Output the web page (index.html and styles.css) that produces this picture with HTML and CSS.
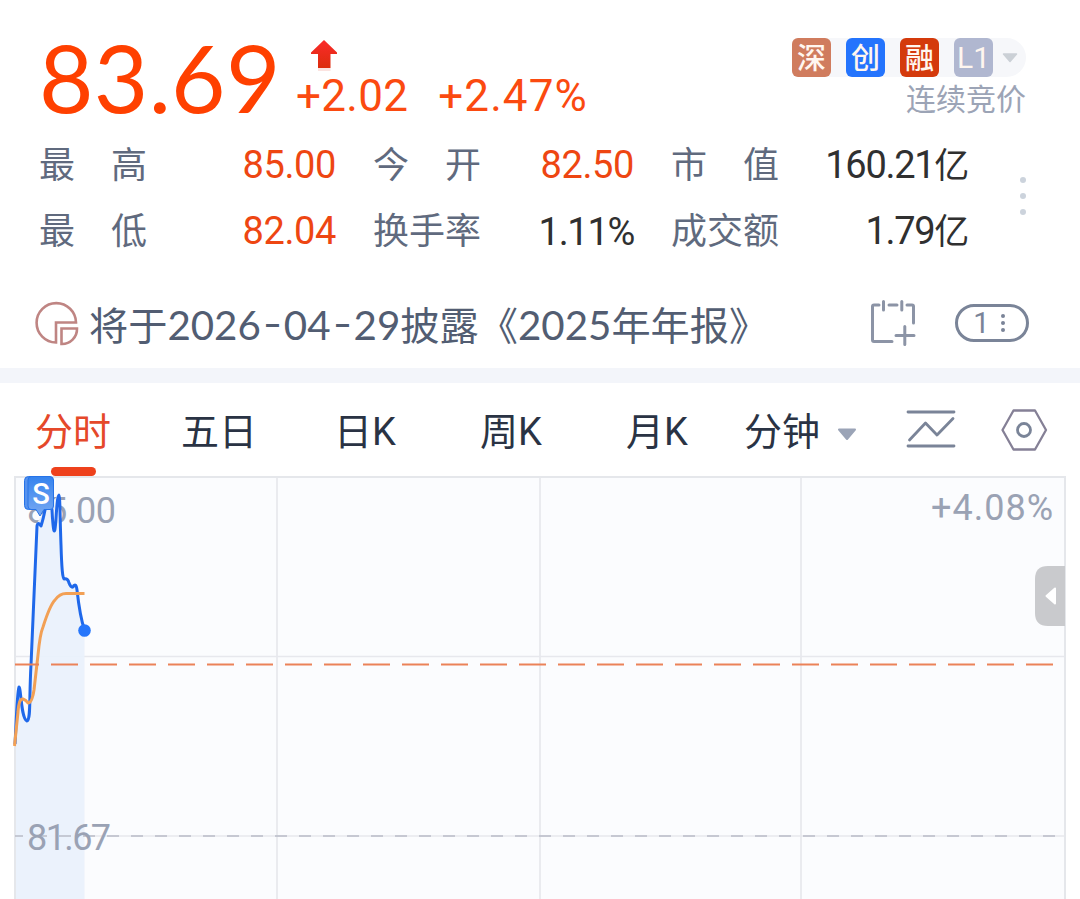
FILE: index.html
```
<!DOCTYPE html>
<html lang="zh-CN">
<head>
    <meta charset="UTF-8">
    <meta name="viewport" content="width=device-width, initial-scale=1.0">
    <title>分时</title>
    <link rel="stylesheet" href="styles.css">
</head>
<body>

    <div class="quote">
        <div class="top">
            <div class="price">83.69</div>
            <div class="change">
                <svg class="arrow" width="28" height="32" viewBox="0 0 28 32">
                    <defs>
                        <linearGradient id="red" x1="0" y1="0" x2="0" y2="1">
                            <stop offset="0" stop-color="#fb2b2b"/>
                            <stop offset="1" stop-color="#dc2c0c"/>
                        </linearGradient>
                    </defs>
                    <path d="M14 1L27 13.5V15H20.500V29H8V15H1V13.500Z" fill="url(#red)"/>
                    <path d="M8 29h12.500v3H8z" fill="#fbe3e0"/>
                </svg>
                <div class="nums"><span>+2.02</span><span class="percent">+2.47%</span></div>
            </div>
            <div class="status">
                <div class="badges">
                    <span class="badge sz">深</span>
                    <span class="badge cy">创</span>
                    <span class="badge rz">融</span>
                    <span class="badge lv">L1</span>
                    <svg width="16" height="10" viewBox="0 0 16 10"><path d="M1.500 1h13L8 8.500z" fill="#cbd0d6" stroke="#cbd0d6" stroke-width="1.500" stroke-linejoin="round"/></svg>
                </div>
                <div class="phase">连续竞价</div>
            </div>
        </div>

        <div class="stats">
            <div class="label"><span>最</span><span>高</span></div>
            <div class="value up">85.00</div>
            <div class="label"><span>今</span><span>开</span></div>
            <div class="value up">82.50</div>
            <div class="label"><span>市</span><span>值</span></div>
            <div class="value tight">160.21<span class="unit">亿</span></div>
            <div class="more"><i></i><i></i><i></i></div>
            <div class="label"><span>最</span><span>低</span></div>
            <div class="value up">82.04</div>
            <div class="label"><span>换</span><span>手</span><span>率</span></div>
            <div class="value tight">1.11%</div>
            <div class="label"><span>成</span><span>交</span><span>额</span></div>
            <div class="value tight">1.79<span class="unit">亿</span></div>
        </div>
    </div>

    <div class="notice">
        <svg width="46" height="46" viewBox="0 0 46 46" fill="none" stroke="#bf8583" stroke-width="2.600">
            <path d="M22 41.500A19.700 19.700 0 1 1 42 21.500H22Z"/>
            <path d="M27.500 27.500H43A15 15 0 0 1 27.500 43Z"/>
        </svg>
        <div class="text">将于<span class="date">2026<b>-</b>04<b>-</b>29</span>披露《<span class="date">2025</span>年年报》</div>
        <svg class="calendar" width="48" height="48" viewBox="0 0 48 48" fill="none" stroke="#8c94a6" stroke-width="3" stroke-linecap="round" stroke-linejoin="round">
            <path d="M10 6H5Q3.500 6 3.500 7.500V41Q3.500 42.500 5 42.500H23M20 6H28M38 6H43Q44.500 6 44.500 7.500V24"/>
            <path d="M14.500 2.500V11M32.800 2.500V11M27 36.500H45M35.800 27.500V45.500"/>
        </svg>
        <div class="count"><span>1</span><div class="dots"><i></i><i></i><i></i></div></div>
    </div>

    <div class="tabs">
        <div class="tab active">分时</div>
        <div class="tab">五日</div>
        <div class="tab">日K</div>
        <div class="tab">周K</div>
        <div class="tab">月K</div>
        <div class="tab minute">分钟
            <svg width="20" height="13" viewBox="0 0 20 13"><path d="M2 1.500h16L10 11z" fill="#9ba4b7" stroke="#9ba4b7" stroke-width="2" stroke-linejoin="round"/></svg>
        </div>
        <svg class="trend" width="50" height="40" viewBox="0 0 50 40" fill="none" stroke="#7a8498" stroke-width="2.800" stroke-linecap="round" stroke-linejoin="round">
            <path d="M2 3H48M2 37H48M3.500 31L19.500 14L31 26L47 9.500"/>
        </svg>
        <svg class="setting" width="48" height="44" viewBox="0 0 48 44" fill="none" stroke="#858096" stroke-width="2.300" stroke-linejoin="round">
            <path d="M13.500 2.500H35L46 22L35 41.500H13.500L2.500 22Z"/>
            <circle cx="24" cy="22" r="6.500" stroke="#7a8498" stroke-width="2.800"/>
        </svg>
    </div>

    <svg class="chart" width="1080" height="423" viewBox="0 476 1080 423">
        <defs>
            <linearGradient id="mark" x1="0" y1="0" x2="0" y2="1">
                <stop offset="0" stop-color="#3583ee"/>
                <stop offset="1" stop-color="#78a9f2"/>
            </linearGradient>
        </defs>
        <rect x="15" y="477" width="1050" height="440" fill="#fbfcfe" stroke="#e5e7eb" stroke-width="2"/>
        <path class="grid" d="M277 478V899M540 478V899M801 478V899M16 656.500H1064M16 836H1064"/>

        <!-- axis labels -->
        <text class="axis" x="27" y="523" textLength="89">85.00</text>
        <text class="axis" x="931" y="520" textLength="122">+4.08%</text>

        <!-- price -->
        <path d="M16 745L19 687L27 721L37 523L48 505L59 495L63 578L76 586L84.500 630V899H16Z" fill="#e9f1fc" fill-opacity=".92"/>
        <path d="M15 836H1057" stroke="#b9bcc7" stroke-width="1.700" stroke-dasharray="12 12" stroke-dashoffset="4"/>
        <text class="axis" x="27" y="850" textLength="84">81.67</text>
        <path class="line price-line" d="M15 744C16 728 17 692 19 687C21 687 21 719 27 721C31 719 29 700 31 665L37 526Q38 521 41 526Q43 520 45 510L49 498L52 510Q54 547 56 519C57 501 58 495 59 495C60 495 60 520 61 545Q62 579 64 579Q68 578 69 583Q71 588 73 587Q76 582 77 590Q80 617 84.500 630"/>
        <path class="line avg-line" d="M14.500 746L18 712Q19 698 23 699Q26 700 28 703Q32 703 34 690L38 655Q40 634 43 627Q50 605 55 600Q60 593 67 593.500H84.500"/>
        <path d="M15 664.500H1054" stroke="#eb8258" stroke-width="2" stroke-dasharray="27 12" stroke-dashoffset="3"/>
        <circle cx="84.500" cy="630.500" r="6.300" fill="#2676fb"/>

        <!-- trade marks -->
        <rect x="24.500" y="476.500" width="27" height="33" rx="4" fill="#5793ee" stroke="#2673e8"/>
        <path d="M31 476.500H50Q53.500 476.500 53.500 480V506Q53.500 509.500 50 509.500H44L40 516L36 509.500H31Q28 509.500 28 506V480Q28 476.500 31 476.500Z" fill="url(#mark)" stroke="#2673e8"/>
        <text class="mark" x="41" y="504">S</text>

        <!-- drawer handle -->
        <path d="M1065 566H1048Q1035 566 1035 579V613Q1035 626 1048 626H1065Z" fill="#c9cacd"/>
        <path d="M1055 588.500V603.500L1046.500 596Z" fill="#fff" stroke="#fff" stroke-width="2" stroke-linejoin="round"/>
    </svg>

</body>
</html>
```
FILE: styles.css
```
* {
    box-sizing: border-box;
}
html, body {
    margin: 0;
    padding: 0;
    background-color: white;
    font-family: Roboto, "Noto Sans CJK SC", sans-serif;
    overflow: hidden;
}
svg {
    display: block;
    flex: none;
}
.quote {
    height: 280px;
    padding: 32px 0 0 39px;
}
.top {
    display: flex;
    height: 100px;
}
.price {
    width: 257px;
    font-family: Lato, sans-serif;
    font-size: 94px;
    line-height: 90px;
    letter-spacing: 0.3px;
    color: #ff4000;
}
.arrow {
    margin: 7px 0 0 14px;
}
.nums {
    display: flex;
    gap: 30px;
    font-size: 44px;
    line-height: 50px;
    color: #fb4a10;
    letter-spacing: 0.3px;
}
.percent {
    letter-spacing: 1.1px;
}
.status {
    margin-left: auto;
    margin-right: 54px;
    padding-top: 6px;
}
.badges {
    display: flex;
    align-items: center;
    gap: 15px;
    width: 234px;
    height: 39px;
    border-radius: 6px 20px 20px 6px;
    background-color: #f6f7fa;
}
.badges svg {
    margin-left: -6px;
}
.badge {
    width: 39px;
    height: 39px;
    border-radius: 6px;
    color: #fff6ef;
    font-size: 29px;
    font-weight: 500;
    line-height: 42px;
    text-align: center;
}
.sz {
    background-color: #d07c5e;
}
.cy {
    background-color: #2474fd;
}
.rz {
    background-color: #d43a0c;
}
.lv {
    background-color: #b0b7d0;
    font-size: 30px;
    font-weight: normal;
    line-height: 39px;
}
.phase {
    font-size: 30px;
    line-height: 46px;
    text-align: right;
    color: #9ca4b6;
}
.stats {
    display: grid;
    grid-template-columns: 108px 226px 108px 190px 108px 226px auto;
    grid-template-rows: 66px 66px;
    align-items: center;
}
.label {
    display: flex;
    justify-content: space-between;
    padding-top: 2px;
    font-size: 36px;
    line-height: 50px;
    color: #606a7e;
}
.value {
    padding-right: 37px;
    text-align: right;
    font-size: 38px;
    line-height: 50px;
    letter-spacing: -0.4px;
    color: #303030;
    white-space: nowrap;
}
.up {
    color: #ee4612;
}
.tight {
    padding-top: 1px;
    letter-spacing: -1.3px;
}
.unit {
    font-size: 35px;
}
.more {
    grid-column: 7;
    grid-row: 1 / 3;
    display: flex;
    flex-direction: column;
    gap: 10px;
    padding: 0 0 5px 15px;
}
.more i {
    width: 6px;
    height: 6px;
    border-radius: 50%;
    background-color: #ccd3dc;
}
.notice {
    display: flex;
    align-items: center;
    height: 88px;
    padding-left: 34px;
}
.text {
    width: 789px;
    padding: 3px 0 0 9px;
    font-size: 39.2px;
    line-height: 50px;
    white-space: nowrap;
    color: #525d72;
}
.date {
    font-family: Lato, sans-serif;
    font-size: 40.3px;
}
.date b {
    display: inline-block;
    font-weight: normal;
    padding: 0 4px;
    transform: translateY(-2px) scaleX(1.3);
}
.calendar {
    margin-top: -2px;
}
.count {
    display: flex;
    align-items: center;
    justify-content: center;
    gap: 11px;
    width: 74px;
    height: 38px;
    margin-left: 38px;
    margin-top: -2px;
    padding-right: 6px;
    border: 3px solid #7a8498;
    border-radius: 19px;
    font-size: 29px;
    color: #7a8498;
}
.dots {
    display: flex;
    flex-direction: column;
    gap: 3px;
}
.dots i {
    width: 4px;
    height: 4px;
    border-radius: 50%;
    background-color: #7a8498;
}
.tabs {
    display: flex;
    align-items: flex-start;
    height: 108px;
    padding-top: 24px;
    border-top: 15px solid #f3f5fa;
}
.tab {
    display: flex;
    flex-direction: column;
    align-items: center;
    width: 146px;
    font-size: 38px;
    line-height: 50px;
    color: #2a3344;
}
.active {
    color: #e5482a;
}
.active::after {
    content: "";
    width: 45px;
    height: 9px;
    margin-top: 10px;
    border-radius: 5px;
    background-color: #ee411c;
}
.minute {
    flex-direction: row;
    gap: 17px;
    width: 160px;
    margin-left: 14px;
}
.minute svg {
    margin-top: 5px;
}
.trend {
    margin: 2px 44px 0 2px;
}
.setting {
    margin-top: 1px;
}
.chart {
    width: 1080px;
}
.grid {
    fill: none;
    stroke: #e7e8ed;
    stroke-width: 1.7;
}
.axis {
    font-size: 36px;
    fill: #9aa2b4;
}
.line {
    fill: none;
    stroke-linejoin: round;
}
.price-line {
    stroke: #1f68ea;
    stroke-width: 3;
}
.avg-line {
    stroke: #f2a055;
    stroke-width: 3;
}
.mark {
    font-size: 29px;
    font-weight: 500;
    text-anchor: middle;
    fill: #fff;
}
```
